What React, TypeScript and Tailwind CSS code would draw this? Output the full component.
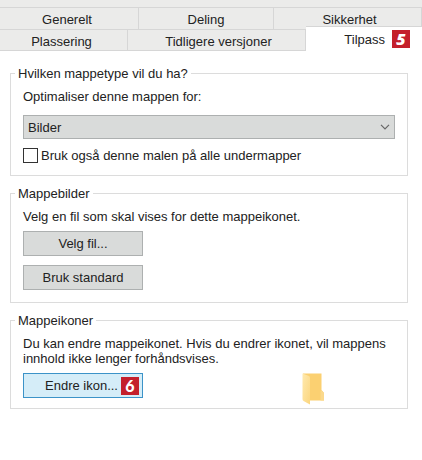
import { useState } from "react";

function Badge({ children, className }: { children: string; className: string }) {
  return (
    <span
      className={
        "flex h-[18px] w-[18px] shrink-0 items-center justify-center bg-[#c4202c] text-[16px] leading-[18px] text-white " +
        className
      }
    >
      {children}
    </span>
  );
}

function Group({ title, children, className }: { title: string; children: React.ReactNode; className: string }) {
  return (
    <fieldset className={"min-w-0 border border-[#dcdcdc] px-3 pt-2 " + className}>
      <legend className="-ml-2 px-[3px]">{title}</legend>
      {children}
    </fieldset>
  );
}

function Folder() {
  return (
    <svg viewBox="0 0 22 32" className="mr-[71px] h-8 w-[22px] shrink-0" role="img" aria-label="Mappe">
      <defs>
        <linearGradient id="front" x1="0" y1="0" x2="1" y2="1">
          <stop offset="0" stopColor="#ffe9ae" />
          <stop offset="1" stopColor="#fbd67f" />
        </linearGradient>
      </defs>
      <path d="M1 0.5H19.5V17L22 20V27.5H6L1 25Z" fill="#fbd071" />
      <path d="M19.5 17L22 20V27.5H18.5V18Z" fill="#fbd98c" />
      <path d="M0.5 0.5L7 3Q8 3.5 8 5V31.5L1.5 28Q0.5 27.4 0.5 26Z" fill="url(#front)" />
    </svg>
  );
}

const tab = "border-[#d6d6d6] text-center";
const btn = "flex h-[25px] w-[120px] items-center justify-center border border-[#adb0b0] bg-[#d9dbda]";

export default function App() {
  const [type, setType] = useState("Bilder");
  const [sub, setSub] = useState(false);

  return (
    <main className="min-h-screen bg-white font-['Liberation_Sans',Arial,sans-serif] text-[13px] leading-[15px] text-[#222]">
      <div role="tablist" className="bg-[#ebebea] pt-[7px]">
        <div className="grid h-[22px] grid-cols-[139fr_135fr_148fr] border-t border-[#d6d6d6]">
          <button role="tab" className={tab + " border-r pt-0.5 pr-1"}>Generelt</button>
          <button role="tab" className={tab + " border-r pt-0.5"}>Deling</button>
          <button role="tab" className={tab + " border-r pt-0.5 pl-1"}>Sikkerhet</button>
        </div>
        <div className="grid h-[22px] grid-cols-[128fr_178fr_116fr]">
          <button role="tab" className={tab + " border-y border-r pt-0.5 pr-1"}>Plassering</button>
          <button role="tab" className={tab + " border-y border-r pt-0.5 pl-1"}>Tidligere versjoner</button>
          <button
            role="tab"
            aria-selected="true"
            className="-mt-[3px] flex items-center justify-end gap-[7px] border-t border-[#d6d6d6] bg-white pr-3"
          >
            Tilpass <Badge className="font-['Open_Sans',sans-serif] font-extrabold italic">5</Badge>
          </button>
        </div>
      </div>

      <div className="flex flex-col gap-2.5 pt-[15px] pr-3.5 pl-2.5">
        <Group title="Hvilken mappetype vil du ha?" className="pb-3">
          <label htmlFor="type" className="block">Optimaliser denne mappen for:</label>
          <div className="relative mt-[11px]">
            <select
              id="type"
              value={type}
              onChange={e => setType(e.target.value)}
              className="block h-6 w-full appearance-none border border-[#adb0b0] bg-[#d9dbda] px-1"
            >
              <option>Bilder</option>
              <option>Dokumenter</option>
              <option>Musikk</option>
              <option>Videoer</option>
            </select>
            <svg viewBox="0 0 10 6" className="pointer-events-none absolute top-[9px] right-[5px] h-1.5 w-2.5" fill="none" stroke="#666" strokeWidth="1.2">
              <path d="M1 0.8L5 4.8L9 0.8" />
            </svg>
          </div>
          <label className="mt-[9px] flex items-center gap-[3px]">
            <input
              type="checkbox"
              checked={sub}
              onChange={e => setSub(e.target.checked)}
              className="h-[15px] w-[15px] shrink-0 appearance-none border border-[#333] bg-white checked:bg-[#333]"
            />
            Bruk også denne malen på alle undermapper
          </label>
        </Group>

        <Group title="Mappebilder" className="pb-3">
          <p>Velg en fil som skal vises for dette mappeikonet.</p>
          <div className="mt-[7px] flex flex-col gap-[9px]">
            <button className={btn}>Velg fil...</button>
            <button className={btn}>Bruk standard</button>
          </div>
        </Group>

        <Group title="Mappeikoner" className="pb-2.5">
          <p>Du kan endre mappeikonet. Hvis du endrer ikonet, vil mappens innhold ikke lenger forhåndsvises.</p>
          <div className="mt-[7px] flex h-[25px] items-start justify-between">
            <button className="flex h-[25px] w-[120px] items-center justify-end gap-[3px] border border-[#3c93c8] bg-[#d5edf8] pr-[3px]">
              Endre ikon... <Badge className="font-[Lato,sans-serif] font-black">6</Badge>
            </button>
            <Folder />
          </div>
        </Group>
      </div>
    </main>
  );
}
